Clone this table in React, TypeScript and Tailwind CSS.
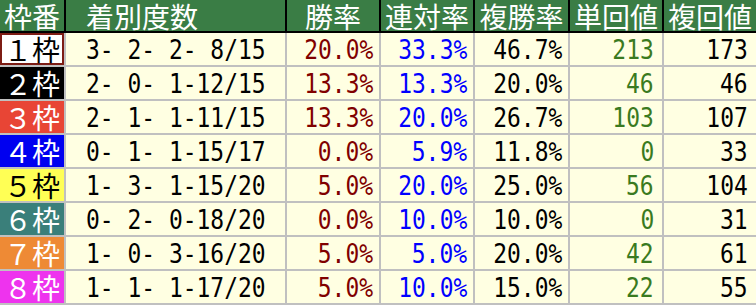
const rows = [
  { n: '１', bg: 'bg-white border-2 border-[#7d1c14]', fg: 'text-black', rec: '3- 2- 2- 8/15', win: '20.0%', ren: '33.3%', fuku: '46.7%', tan: '213', fv: '173' },
  { n: '２', bg: 'bg-black', fg: 'text-white', rec: '2- 0- 1-12/15', win: '13.3%', ren: '13.3%', fuku: '20.0%', tan: '46', fv: '46' },
  { n: '３', bg: 'bg-[#e84535]', fg: 'text-white', rec: '2- 1- 1-11/15', win: '13.3%', ren: '20.0%', fuku: '26.7%', tan: '103', fv: '107' },
  { n: '４', bg: 'bg-[#0000f0]', fg: 'text-white', rec: '0- 1- 1-15/17', win: '0.0%', ren: '5.9%', fuku: '11.8%', tan: '0', fv: '33' },
  { n: '５', bg: 'bg-[#ffff55]', fg: 'text-black', rec: '1- 3- 1-15/20', win: '5.0%', ren: '20.0%', fuku: '25.0%', tan: '56', fv: '104' },
  { n: '６', bg: 'bg-[#3a7f7a]', fg: 'text-white', rec: '0- 2- 0-18/20', win: '0.0%', ren: '10.0%', fuku: '10.0%', tan: '0', fv: '31' },
  { n: '７', bg: 'bg-[#ee8a35]', fg: 'text-white', rec: '1- 0- 3-16/20', win: '5.0%', ren: '5.0%', fuku: '20.0%', tan: '42', fv: '61' },
  { n: '８', bg: 'bg-[#ee33ee]', fg: 'text-white', rec: '1- 1- 1-17/20', win: '5.0%', ren: '10.0%', fuku: '15.0%', tan: '22', fv: '55' },
];

const cols = 'grid grid-cols-[64px_219px_92px_92px_93px_92px_92px] gap-x-[2px]';
const jp = "font-['Noto_Sans_CJK_JP',sans-serif]";
const mono = "font-['DejaVu_Sans_Mono',monospace] text-[27px] leading-none whitespace-pre";

// 数字はビットマップ風に少し縦長に見せる
function Num({ v, color, pr = 'pr-2' }: { v: string; color: string; pr?: string }) {
  return (
    <div className={`flex h-[32px] items-center justify-end bg-[#ffffe2] ${pr}`}>
      <span className={`inline-block origin-right scale-x-85 ${mono} ${color}`}>{v}</span>
    </div>
  );
}

export default function App() {
  return (
    <div className="w-[756px] h-[305px] overflow-hidden bg-[#c0c0c0]">
      <div className={`${cols} bg-black pb-[2px] ${jp} text-[28px] leading-none text-white`}>
        <div className="flex h-[31px] items-center justify-center bg-[#3a7d45]">枠番</div>
        <div className="flex h-[31px] items-center bg-[#3a7d45] pl-5">着別度数</div>
        <div className="flex h-[31px] items-center justify-center bg-[#3a7d45]">勝率</div>
        <div className="flex h-[31px] items-center justify-center bg-[#3a7d45]">連対率</div>
        <div className="flex h-[31px] items-center justify-center bg-[#3a7d45]">複勝率</div>
        <div className="flex h-[31px] items-center justify-center bg-[#3a7d45]">単回値</div>
        <div className="flex h-[31px] items-center justify-center bg-[#3a7d45]">複回値</div>
      </div>
      {rows.map((r) => (
        <div key={r.n} className={`${cols} bg-[#c0c0c0] pb-[2px]`}>
          <div className={`flex h-[32px] items-center justify-center ${r.bg} ${r.fg} ${jp} text-[28px] leading-none`}>
            {r.n}枠
          </div>
          <div className="flex h-[32px] items-center bg-[#ffffe2] pl-5">
            <span className={`inline-block origin-left scale-x-85 ${mono} text-black`}>{r.rec}</span>
          </div>
          <Num v={r.win} color="text-[#800000]" pr="pr-[6px]" />
          <Num v={r.ren} color="text-[#0000ff]" pr="pr-[6px]" />
          <Num v={r.fuku} color="text-black" pr="pr-[6px]" />
          <Num v={r.tan} color="text-[#3a7a20]" />
          <Num v={r.fv} color="text-black" />
        </div>
      ))}
    </div>
  );
}
